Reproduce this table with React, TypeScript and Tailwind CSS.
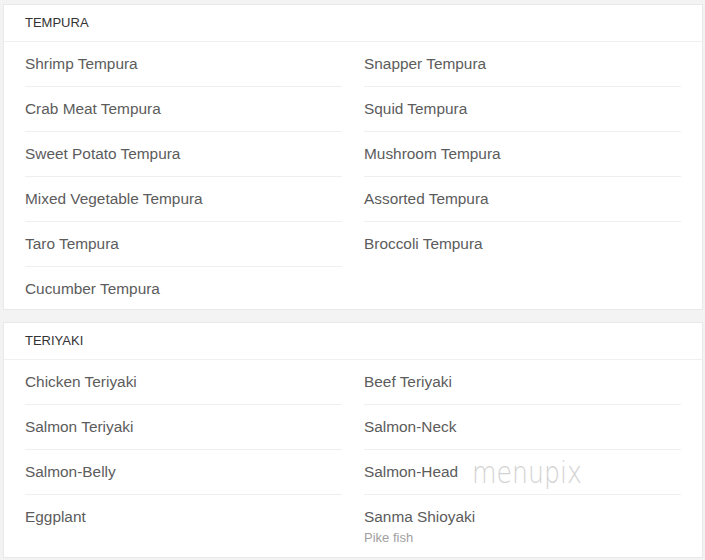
import React from "react";

type Item = { name: string; desc?: string };

const tempuraLeft: Item[] = [
  { name: "Shrimp Tempura" },
  { name: "Crab Meat Tempura" },
  { name: "Sweet Potato Tempura" },
  { name: "Mixed Vegetable Tempura" },
  { name: "Taro Tempura" },
  { name: "Cucumber Tempura" },
];
const tempuraRight: Item[] = [
  { name: "Snapper Tempura" },
  { name: "Squid Tempura" },
  { name: "Mushroom Tempura" },
  { name: "Assorted Tempura" },
  { name: "Broccoli Tempura" },
];
const teriyakiLeft: Item[] = [
  { name: "Chicken Teriyaki" },
  { name: "Salmon Teriyaki" },
  { name: "Salmon-Belly" },
  { name: "Eggplant" },
];
const teriyakiRight: Item[] = [
  { name: "Beef Teriyaki" },
  { name: "Salmon-Neck" },
  { name: "Salmon-Head" },
  { name: "Sanma Shioyaki", desc: "Pike fish" },
];

function Column({ items }: { items: Item[] }) {
  return (
    <div className="flex flex-col">
      {items.map((it, i) => (
        <div
          key={it.name}
          className={
            i < items.length - 1
              ? "pt-[12px] pb-[12px] border-b border-[#efefef]"
              : it.desc
              ? "pt-[12px] pb-[11px]"
              : "pt-[12px] pb-[10px]"
          }
        >
          <div className="text-[15.4px] leading-[20px] text-[#5c5c5c]">{it.name}</div>
          {it.desc && (
            <div className="text-[13px] leading-[17px] text-[#a0a0a0] mt-[2px]">{it.desc}</div>
          )}
        </div>
      ))}
    </div>
  );
}

function Section({
  title,
  left,
  right,
}: {
  title: string;
  left: Item[];
  right: Item[];
}) {
  return (
    <div className="bg-white border border-[#e9e9e9]">
      <div className="h-[37px] flex items-center px-[21px] border-b border-[#f0f0f0] text-[13px] text-[#333333] uppercase">
        {title}
      </div>
      <div className="grid grid-cols-2 gap-x-[22px] px-[21px]">
        <Column items={left} />
        <Column items={right} />
      </div>
    </div>
  );
}

export default function App() {
  return (
    <div
      className="w-[705px] h-[560px] bg-[#f3f3f3] pt-[4px] pl-[3px] pr-[2px] relative overflow-hidden"
      style={{ fontFamily: '"Liberation Sans", Arial, sans-serif' }}
    >
      <div className="flex flex-col gap-[12px]">
        <Section title="Tempura" left={tempuraLeft} right={tempuraRight} />
        <Section title="Teriyaki" left={teriyakiLeft} right={teriyakiRight} />
      </div>
      <div
        className="absolute left-[472px] top-[458px] text-[30px] leading-none font-extralight text-[#d2d2d2] scale-x-[0.84] origin-left pointer-events-none"
        style={{ fontFamily: '"DejaVu Sans", sans-serif' }}
      >
        menupix
      </div>
    </div>
  );
}
